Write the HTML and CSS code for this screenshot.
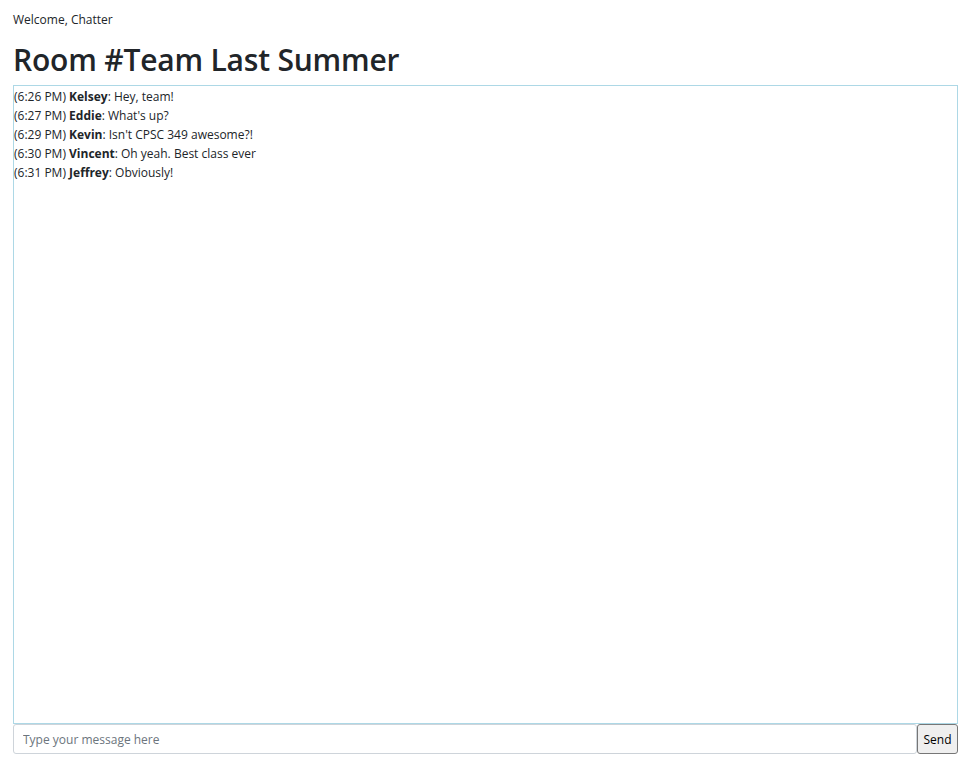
FILE: index.html
```html
<!DOCTYPE html>
<html>
<head>
<meta charset="utf-8">
<link rel="stylesheet" href="styles.css">
</head>
<body>
<div class="app">
  <div class="welcome">Welcome, Chatter</div>
  <h1 class="room-title">Room #Team Last Summer</h1>
  <div class="chat-box">
    <div class="msg">(6:26 PM) <b>Kelsey</b>: Hey, team!</div>
    <div class="msg">(6:27 PM) <b>Eddie</b>: What's up?</div>
    <div class="msg">(6:29 PM) <b>Kevin</b>: Isn't CPSC 349 awesome?!</div>
    <div class="msg">(6:30 PM) <b>Vincent</b>: Oh yeah. Best class ever</div>
    <div class="msg">(6:31 PM) <b>Jeffrey</b>: Obviously!</div>
  </div>
  <div class="composer">
    <input class="msg-input" type="text" placeholder="Type your message here">
    <button class="send-btn">Send</button>
  </div>
</div>
</body>
</html>
```
FILE: styles.css
```css
html, body {
  margin: 0;
  padding: 0;
  background: #fff;
}
body {
  font-family: "Open Sans", "Noto Sans", sans-serif;
  color: #212529;
}
.app {
  padding: 11px 9px 0 13px;
  display: flex;
  flex-direction: column;
}
.welcome {
  font-size: 12px;
  line-height: 18px;
}
.room-title {
  font-size: 30px;
  font-weight: 600;
  line-height: 38px;
  margin: 12px 0 6px 0;
  letter-spacing: -0.2px;
}
.chat-box {
  height: 636px;
  border: 1px solid #add8e6;
  display: flex;
  flex-direction: column;
  padding-top: 1px;
}
.msg {
  font-size: 12px;
  line-height: 19px;
  color: #212529;
}
.msg b {
  font-weight: 700;
}
.composer {
  display: flex;
  height: 30px;
}
.msg-input {
  flex: 1;
  border: 1px solid #ced4da;
  border-radius: 3px;
  padding: 0 9px;
  font-family: inherit;
  font-size: 12px;
  color: #495057;
  outline: none;
}
.msg-input::placeholder {
  color: #6c757d;
}
.send-btn {
  width: 41px;
  border: 1px solid #767676;
  border-radius: 3px;
  background: #efefef;
  font-family: inherit;
  font-size: 12px;
  color: #000;
  padding: 0;
}
```
